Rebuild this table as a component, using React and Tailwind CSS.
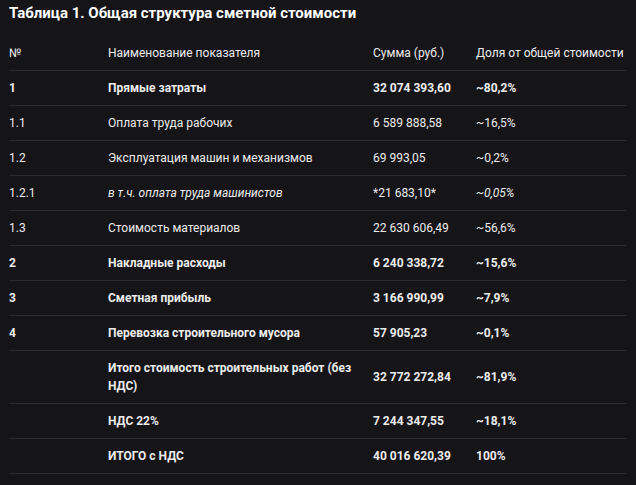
const rows = [
  { n: "1", name: "Прямые затраты", sum: "32 074 393,60", share: "~80,2%", bold: true },
  { n: "1.1", name: "Оплата труда рабочих", sum: "6 589 888,58", share: "~16,5%" },
  { n: "1.2", name: "Эксплуатация машин и механизмов", sum: "69 993,05", share: "~0,2%" },
  { n: "1.2.1", name: "в т.ч. оплата труда машинистов", sum: "*21 683,10*", share: "~0,05%", italic: true },
  { n: "1.3", name: "Стоимость материалов", sum: "22 630 606,49", share: "~56,6%" },
  { n: "2", name: "Накладные расходы", sum: "6 240 338,72", share: "~15,6%", bold: true },
  { n: "3", name: "Сметная прибыль", sum: "3 166 990,99", share: "~7,9%", bold: true },
  { n: "4", name: "Перевозка строительного мусора", sum: "57 905,23", share: "~0,1%", bold: true },
  { n: "", name: "Итого стоимость строительных работ (без НДС)", sum: "32 772 272,84", share: "~81,9%", bold: true },
  { n: "", name: "НДС 22%", sum: "7 244 347,55", share: "~18,1%", bold: true },
  { n: "", name: "ИТОГО с НДС", sum: "40 016 620,39", share: "100%", bold: true },
];

function Row({ r }) {
  const cls = r.bold ? "font-bold" : "font-normal";
  return (
    <div className="grid grid-cols-[99px_265px_103px_150px] border-b border-[#2b2b2e] items-center">
      <div className={`py-2 ${cls}`}>{r.n}</div>
      <div className={`py-2 pr-4 ${cls} ${r.italic ? "italic" : ""}`}>{r.name}</div>
      <div className={`py-2 ${cls}`}>{r.sum}</div>
      <div className={`py-2 ${cls} ${r.italic ? "italic" : ""}`}>{r.share}</div>
    </div>
  );
}

export default function App() {
  return (
    <div
      className="w-[636px] h-[485px] bg-[#151417] text-[#ececec] px-[9px] pt-[1px] overflow-hidden"
      style={{ fontFamily: 'Roboto, "Liberation Sans", sans-serif' }}
    >
      <h1 className="text-[15px] leading-[24px] font-bold text-white mb-[11px]">
        Таблица 1. Общая структура сметной стоимости
      </h1>
      <div className="w-[617px] text-[12px] leading-[18px]">
        <div className="grid grid-cols-[99px_265px_103px_150px] border-b border-[#2b2b2e] items-center">
          <div className="py-2">№</div>
          <div className="py-2">Наименование показателя</div>
          <div className="py-2">Сумма (руб.)</div>
          <div className="py-2 whitespace-nowrap">Доля от общей стоимости</div>
        </div>
        {rows.map((r, i) => (
          <Row key={i} r={r} />
        ))}
      </div>
    </div>
  );
}
